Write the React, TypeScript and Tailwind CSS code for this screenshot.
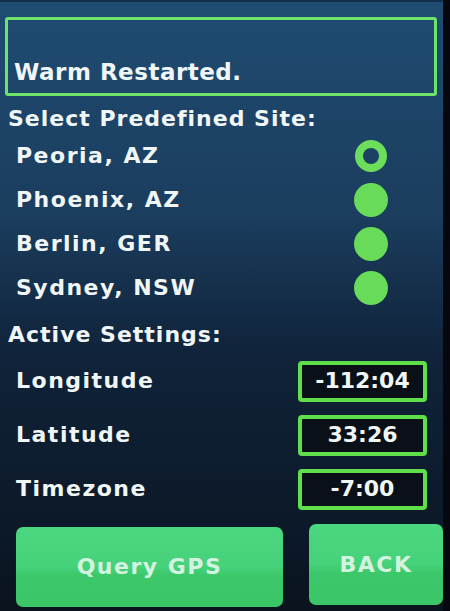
const sites = [
  { name: "Peoria, AZ", selected: true },
  { name: "Phoenix, AZ", selected: false },
  { name: "Berlin, GER", selected: false },
  { name: "Sydney, NSW", selected: false },
];

const settings = [
  { label: "Longitude", value: "-112:04" },
  { label: "Latitude", value: "33:26" },
  { label: "Timezone", value: "-7:00" },
];

const font = "font-['DejaVu_Sans',sans-serif] font-bold";
const label = "text-[22px] leading-[24px] tracking-[1.5px]";

const App = () => {
  return (
    <div className="w-[450px] h-[611px] flex bg-[#05080f] overflow-hidden">
      <div
        className={`w-[443px] h-full flex flex-col text-[#f0f6f6] ${font} border-t-[2px] border-[#12304d] bg-[linear-gradient(180deg,#1f4c72_0%,#1b3d5e_35%,#10233a_58%,#0a141f_100%)]`}
      >
        <div className="mt-[15px] ml-[5px] w-[432px] h-[79px] border-[3px] border-[#6ee36a] rounded-[3px] flex items-end pl-[6px] pb-[9px]">
          <span className="text-[23px] leading-[24px] tracking-[0.5px]">Warm Restarted.</span>
        </div>

        <div className={`mt-[11px] ml-[8px] ${label} tracking-[1px]`}>
          Select Predefined Site:
        </div>

        <div className="mt-[3px] flex flex-col">
          {sites.map((site) => (
            <div
              key={site.name}
              className="h-[44px] flex items-center justify-between pl-[16px] pr-[55px]"
            >
              <span className={label}>{site.name}</span>
              {site.selected ? (
                <div className="w-[32px] h-[32px] mr-[1px] rounded-full border-[8px] border-[#6cde5c]" />
              ) : (
                <div className="w-[34px] h-[34px] rounded-full bg-[#68db58]" />
              )}
            </div>
          ))}
        </div>

        <div className={`mt-[13px] ml-[8px] ${label} tracking-[1px]`}>
          Active Settings:
        </div>

        <div className="mt-[7px] flex flex-col">
          {settings.map((s) => (
            <div
              key={s.label}
              className="h-[54px] flex items-center justify-between pl-[16px] pr-[16px]"
            >
              <span className={label}>{s.label}</span>
              <div className="w-[129px] h-[41px] border-[4px] border-[#5fe04a] rounded-[4px] bg-[#0a1018] flex items-center justify-center">
                <span className="text-[22px] leading-[24px]">{s.value}</span>
              </div>
            </div>
          ))}
        </div>

        <div className="flex items-start pl-[16px] gap-[26px]">
          <button className="mt-[11px] w-[267px] h-[80px] rounded-[7px] bg-[linear-gradient(180deg,#4bd680_0%,#46d27a_50%,#3cc86a_60%,#3ac567_100%)] flex items-center justify-center">
            <span className={`${label} text-[#d3f2df]`}>Query GPS</span>
          </button>
          <button className="mt-[8px] w-[134px] h-[81px] rounded-[7px] bg-[linear-gradient(180deg,#4bd680_0%,#46d27a_50%,#3cc86a_60%,#3ac567_100%)] flex items-center justify-center">
            <span className={`${label} text-[#d3f2df]`}>BACK</span>
          </button>
        </div>
      </div>
    </div>
  );
};

export default App;
